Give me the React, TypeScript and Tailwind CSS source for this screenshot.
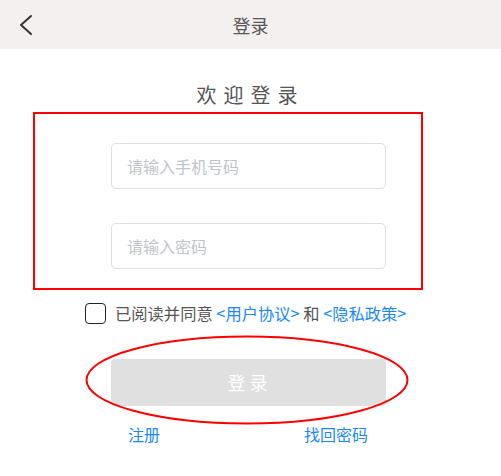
import React from "react";

export default function App() {
  const font = { fontFamily: '"Noto Sans CJK SC", "Noto Sans", sans-serif' };
  return (
    <div className="relative w-[501px] h-[476px] bg-white overflow-hidden" style={font}>
      <div className="h-[49px] bg-[#f5f0f0] grid grid-cols-[1fr_auto_1fr] items-center">
        <div className="pl-[18px] flex items-center">
          <svg width="16" height="22" viewBox="0 0 16 22" fill="none">
            <path d="M13 2 L3 11 L13 20" stroke="#333" strokeWidth="2" strokeLinecap="round" strokeLinejoin="round" />
          </svg>
        </div>
        <div className="text-[18px] leading-[24px] text-[#555]">登录</div>
        <div />
      </div>

      <div className="mt-[32px] text-center text-[20px] leading-[28px] tracking-[7px] text-[#555]">欢迎登录</div>

      <div className="w-[275px] ml-[111px] mt-[34px] flex flex-col gap-[34px]">
        <div className="h-[46px] border border-[#dcdfe6] rounded-[5px] flex items-center pl-[15px] text-[16px] text-[#c0c4cc]">请输入手机号码</div>
        <div className="h-[46px] border border-[#dcdfe6] rounded-[5px] flex items-center pl-[15px] text-[16px] text-[#c0c4cc]">请输入密码</div>
      </div>

      <div className="mt-[34px] pl-[85px] flex items-center gap-[9px] h-[21px] whitespace-nowrap text-[16.3px]">
        <div className="w-[21px] h-[21px] border-[1.5px] border-[#222] rounded-[4px]" />
        <div className="text-[#555] leading-[21px]">
          已阅读并同意 <span className="text-[#1989fa]">&lt;用户协议&gt;</span> 和 <span className="text-[#1989fa]">&lt;隐私政策&gt;</span>
        </div>
      </div>

      <div className="w-[275px] ml-[111px] mt-[35px]">
        <div className="h-[47px] bg-[#e0e0e0] rounded-[4px] flex items-center justify-center text-white text-[18px] pr-[2px]">登 录</div>
        <div className="mt-[17px] flex justify-between pl-[17px] pr-[18px] text-[16px] leading-[22px] text-[#1989fa]">
          <span>注册</span>
          <span>找回密码</span>
        </div>
      </div>

      <div className="absolute left-[33px] top-[112px] w-[390px] h-[178px] border-2 border-[#ff0000] pointer-events-none" />
      <svg className="absolute left-[84px] top-[334px] pointer-events-none" width="326" height="92" viewBox="0 0 326 92">
        <ellipse cx="163" cy="46" rx="160.5" ry="43.5" fill="none" stroke="#ff0000" strokeWidth="2" />
      </svg>
    </div>
  );
}
